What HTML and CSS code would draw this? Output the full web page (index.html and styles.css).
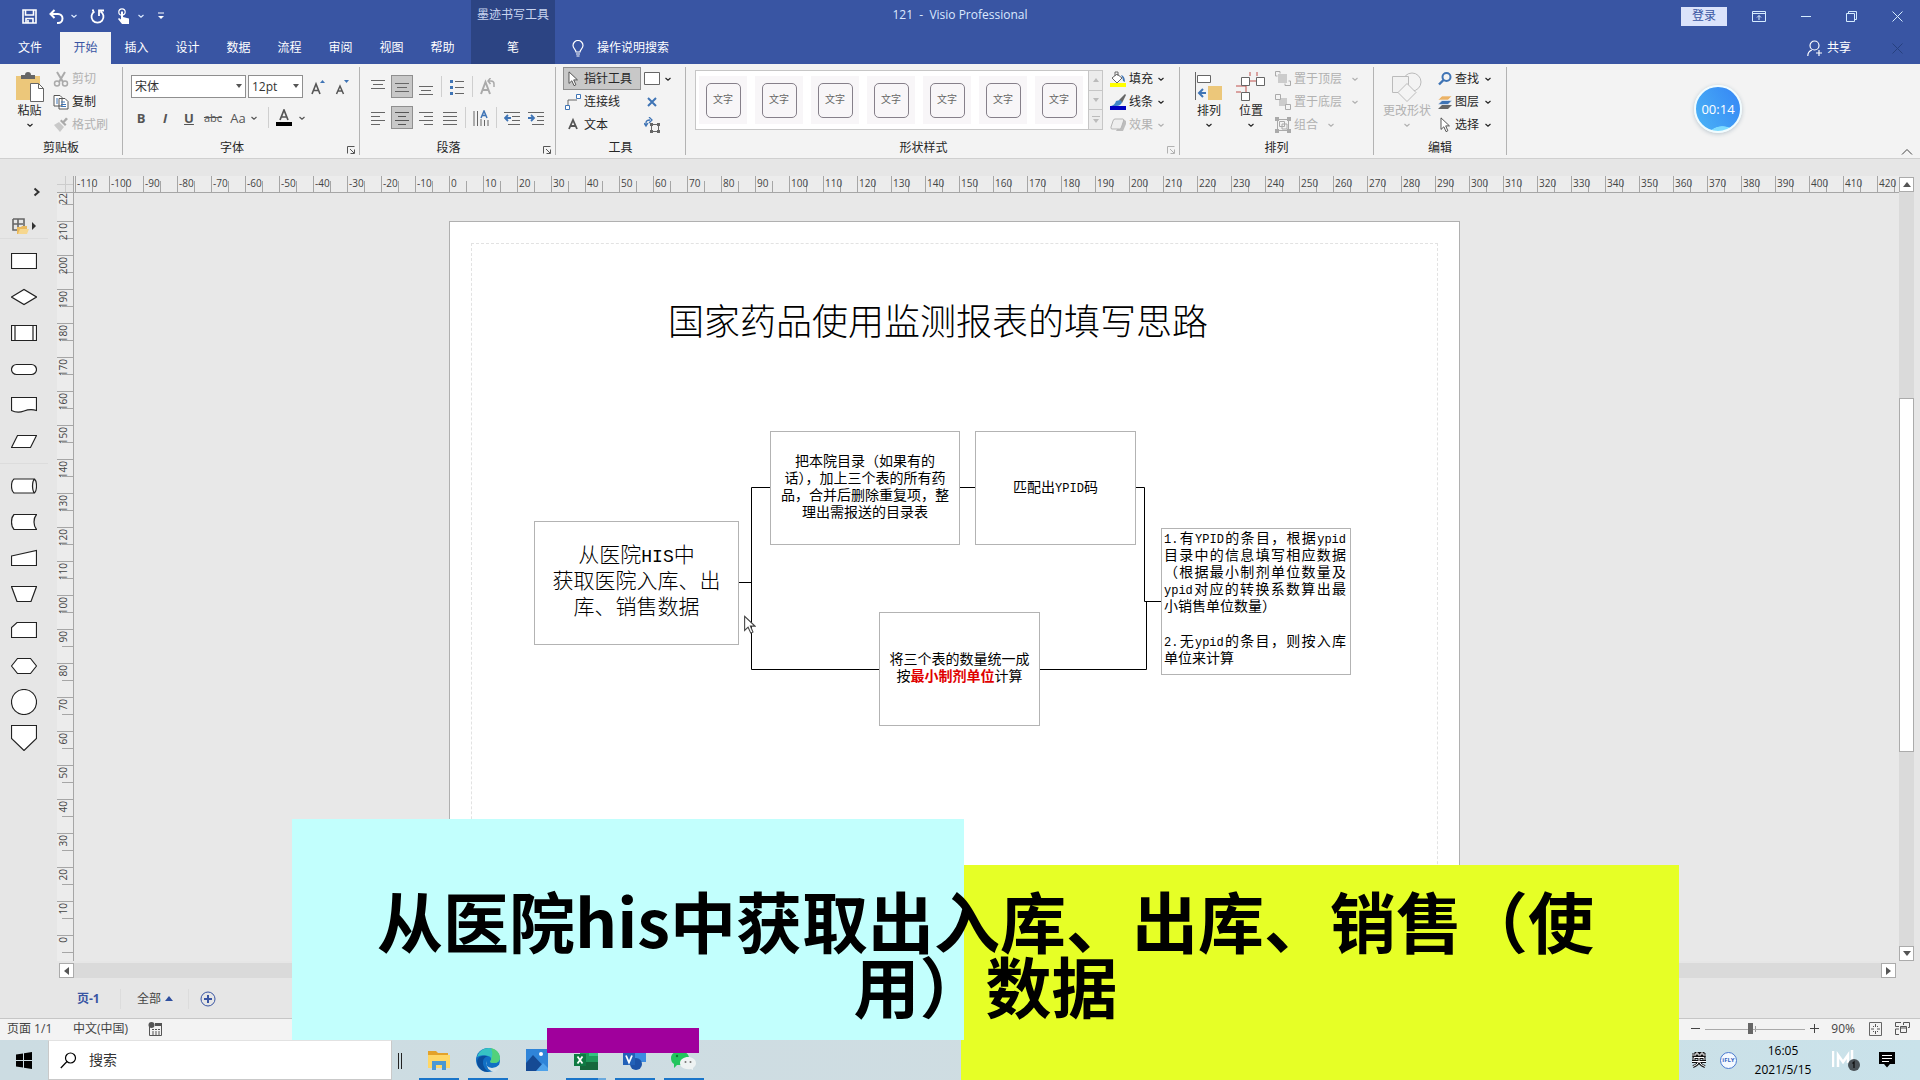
FILE: index.html
```html
<!DOCTYPE html>
<html lang="zh-CN">
<head>
<meta charset="utf-8">
<title>121 - Visio Professional</title>
<link rel="stylesheet" href="styles.css">
</head>
<body>
<svg class="defs" aria-hidden="true">
  <symbol id="chev" viewBox="0 0 8 8"><path d="M1.5 3 4 5.2 6.500 3" fill="none" stroke="currentColor" stroke-width="1.200"/></symbol>
  <symbol id="launch" viewBox="0 0 8 8"><path d="M.5 7.500V.5H7.500M3 3l4 4M7.500 3.500v4h-4" fill="none" stroke="currentColor"/></symbol>
  <symbol id="pointer" viewBox="0 0 12 18"><path d="M1.500 1v13l3.200-3 2.500 5.500 2-1L6.800 10H11z" fill="#fff" stroke="#444"/></symbol>
</svg>

<header class="titlebar">
  <div class="titleleft">
    <div class="qat">
      <button aria-label="保存"><svg width="15" height="15" viewBox="0 0 15 15"><path d="M1 1h13v13H1zM3.500 1v5h8V1M4 14V9.500h7V14M6 11v3" fill="none" stroke="#fff" stroke-width="1.600"/></svg></button>
      <button class="undo" aria-label="撤消"><svg width="15" height="15" viewBox="0 0 15 15"><path d="M5.500 1 1.500 5l4 4M2 5h7a4 4 0 0 1 0 9H8" fill="none" stroke="#fff" stroke-width="2"/></svg><svg class="c8"><use href="#chev"/></svg></button>
      <button aria-label="重做"><svg width="15" height="15" viewBox="0 0 15 15"><path d="M4.500 2.500a6 6 0 1 0 6 0M4 1.500h-2M9 7V1.500h5" fill="none" stroke="#fff" stroke-width="1.800"/></svg></button>
      <button class="touch" aria-label="触摸/鼠标模式"><svg width="14" height="17" viewBox="0 0 14 17"><circle cx="5" cy="4" r="3.200" fill="none" stroke="#fff" stroke-width="1.200"/><path d="M4 3.500h2V9l6 1.500V16H5L1 11l1-1 2 1.500z" fill="#fff"/></svg><svg class="c8"><use href="#chev"/></svg></button>
      <button aria-label="自定义"><svg width="8" height="8" viewBox="0 0 8 8"><path d="M1 1h6" stroke="#fff"/><path d="M1 4h6L4 7z" fill="#fff"/></svg></button>
    </div>
    <div class="ctx">墨迹书写工具</div>
  </div>
  <h1 class="doctitle">121&nbsp; -&nbsp; Visio Professional</h1>
  <div class="winctl">
    <button class="login">登录</button>
    <button aria-label="功能区选项"><svg width="14" height="11" viewBox="0 0 14 11"><path d="M.5.5h13v10H.5zM.5 2.500h13M7 9V4.500M5 6.500l2-2 2 2" fill="none" stroke="#d5ecff"/></svg></button>
    <button aria-label="最小化"><svg width="10" height="10" viewBox="0 0 10 10"><path d="M0 5.500h10" stroke="#d5ecff"/></svg></button>
    <button aria-label="还原"><svg width="11" height="11" viewBox="0 0 11 11"><path d="M.5 2.500h8v8h-8zM2.500 2.500v-2h8v8h-2" fill="none" stroke="#d5ecff"/></svg></button>
    <button aria-label="关闭"><svg width="11" height="11" viewBox="0 0 11 11"><path d="M.5.5l10 10M10.500.5l-10 10" stroke="#d5ecff"/></svg></button>
  </div>
</header>

<nav class="tabs">
  <button class="file">文件</button><button class="on">开始</button><button>插入</button><button>设计</button><button>数据</button><button>流程</button><button>审阅</button><button>视图</button><button>帮助</button>
  <button class="pen">笔</button>
  <button class="tell"><svg width="12" height="17" viewBox="0 0 12 17"><path d="M4 12c0-2.500-3-3.500-3-6.500a5 5 0 0 1 10 0c0 3-3 4-3 6.500zM4 14h4M4.500 16h3" fill="none" stroke="#fff" stroke-width="1.200"/></svg>操作说明搜索</button>
  <button class="share"><svg width="15" height="17" viewBox="0 0 15 17"><circle cx="7.500" cy="5.500" r="4.500" fill="none" stroke="#fff" stroke-width="1.200"/><path d="M.8 16c0-3 1.500-5 4-6M9 13h6M12 10v6" fill="none" stroke="#fff" stroke-width="1.200"/></svg>共享</button>
  <button class="docx" aria-label="关闭文档"><svg width="11" height="11" viewBox="0 0 11 11"><path d="M.5.5l10 10M10.500.5l-10 10" stroke="#26407f"/></svg></button>
</nav>

<section class="ribbon">
  <div class="group clip">
    <div class="gbody">
      <button class="big"><svg width="28" height="30" viewBox="0 0 28 30"><path d="M0 4h24v24H0z" fill="#ecc77a"/><path d="M5 7V3h4a3 3 0 0 1 6 0h4v4z" fill="#666"/><path d="M14.500 11.500h8l5 5v13h-13z" fill="#fff" stroke="#666"/><path d="M22.500 11.500v5h5" fill="none" stroke="#666"/></svg><span>粘贴</span><svg class="c8"><use href="#chev"/></svg></button>
      <div class="col">
        <button class="sm off"><svg width="16" height="16" viewBox="0 0 16 16"><path d="M4 1l6 10M12 1 6 11" stroke="#aaa" stroke-width="2"/><circle cx="4" cy="12.500" r="2.500" fill="none" stroke="#aaa" stroke-width="1.500"/><circle cx="12" cy="12.500" r="2.500" fill="none" stroke="#aaa" stroke-width="1.500"/></svg>剪切</button>
        <button class="sm"><svg width="16" height="16" viewBox="0 0 16 16"><path d="M1 1.500h6l2 2V12H1zM6 4.500h6l3 3V15H6z" fill="#fff" stroke="#555"/><path d="M8 8h4M8 10.500h5M8 12.500h5M3 5h2M3 7h2M3 9h2" stroke="#3f74b5"/></svg>复制</button>
        <button class="sm off"><svg width="16" height="16" viewBox="0 0 16 16"><path d="M1 8l5-3 5 5-4 5z" fill="#c9c9c9"/><path d="M7 4l5 5 1.500-1.500-2-2L15 2l-2-1.500L10 4 8.500 2.500z" fill="#aaa"/></svg>格式刷</button>
      </div>
    </div>
    <div class="glabel">剪贴板</div>
  </div>

  <div class="group font has-lau">
    <div class="gbody two">
      <div class="row">
        <label class="combo wide"><select aria-label="字体"><option>宋体</option></select><svg width="6" height="4" viewBox="0 0 6 4"><path d="M0 0h6L3 4z" fill="#555"/></svg></label>
        <label class="combo"><select aria-label="字号"><option>12pt</option></select><svg width="6" height="4" viewBox="0 0 6 4"><path d="M0 0h6L3 4z" fill="#555"/></svg></label>
        <button class="ib" aria-label="增大字号"><svg width="14" height="16" viewBox="0 0 14 16"><path d="M1 15 5 5l4 10M2.500 11.500h5" fill="none" stroke="#555" stroke-width="1.600"/><path d="M9 4l2.500-3L14 4z" fill="#3f74b5"/></svg></button>
        <button class="ib" aria-label="减小字号"><svg width="14" height="16" viewBox="0 0 14 16"><path d="M1.500 15 5 7l3.500 8M3 12h4" fill="none" stroke="#555" stroke-width="1.500"/><path d="M9 1h5l-2.500 3z" fill="#3f74b5"/></svg></button>
      </div>
      <div class="row fmt">
        <button class="ib"><b>B</b></button><button class="ib"><b><i>I</i></b></button><button class="ib"><b><u>U</u></b></button><button class="ib"><s>abc</s></button><button class="ib aa">Aa<svg class="c8"><use href="#chev"/></svg></button><i class="sep"></i><button class="ib fc" aria-label="字体颜色"><svg width="16" height="17" viewBox="0 0 16 17"><path d="M4 11 8 1l4 10M5.500 8h5" fill="none" stroke="#555" stroke-width="1.700"/><path d="M0 13h16v4H0z"/></svg><svg class="c8"><use href="#chev"/></svg></button>
      </div>
    </div>
    <div class="glabel">字体</div><svg class="lau"><use href="#launch"/></svg>
  </div>

  <div class="group para has-lau">
    <div class="gbody two">
      <div class="row">
        <button class="ib" aria-label="顶端对齐"><svg width="14" height="16"><path d="M0 1.500h14M2 5.500h10M0 9.500h14" stroke="#666"/></svg></button>
        <button class="ib sel" aria-label="中部对齐"><svg width="14" height="16"><path d="M0 4.500h14M2 8.500h10M0 12.500h14" stroke="#666"/></svg></button>
        <button class="ib" aria-label="底端对齐"><svg width="14" height="16"><path d="M0 7.500h14M2 11.500h10M0 15.500h14" stroke="#666"/></svg></button>
        <i class="sep"></i>
        <button class="ib" aria-label="项目符号"><svg width="14" height="16"><path d="M5 2.500h9M5 8.500h9M5 14.500h9" stroke="#666"/><path d="M0 1h3v3H0zM0 7h3v3H0zM0 13h3v3H0z" fill="#3f74b5"/></svg></button>
        <i class="sep"></i>
        <button class="ib" aria-label="旋转文本"><svg width="16" height="17" viewBox="0 0 16 17"><path d="M1 16 5.500 4 10 16M2.500 12h6" fill="none" stroke="#aaa" stroke-width="2"/><path d="M8 3h3a3 3 0 0 1 3 3v3M10.500 0 8 3l2.500 3" fill="none" stroke="#aaa" stroke-width="1.500"/></svg></button>
      </div>
      <div class="row">
        <button class="ib" aria-label="左对齐"><svg width="14" height="14"><path d="M0 1.500h14M0 5.500h9M0 9.500h14M0 13.500h9" stroke="#666"/></svg></button>
        <button class="ib sel" aria-label="居中"><svg width="14" height="14"><path d="M0 1.500h14M3 5.500h8M0 9.500h14M3 13.500h8" stroke="#555"/></svg></button>
        <button class="ib" aria-label="右对齐"><svg width="14" height="14"><path d="M0 1.500h14M5 5.500h9M0 9.500h14M5 13.500h9" stroke="#666"/></svg></button>
        <button class="ib" aria-label="两端对齐"><svg width="14" height="14"><path d="M0 1.500h14M0 5.500h14M0 9.500h14M0 13.500h14" stroke="#666"/></svg></button>
        <i class="sep"></i>
        <button class="ib" aria-label="文字方向"><svg width="16" height="16" viewBox="0 0 16 16"><path d="M1 1v15M4.500 1v15M8 9v7M11.500 10v6M15 10v6" stroke="#666"/><path d="M8 8l3-7 3 7M9 5.500h4" fill="none" stroke="#3f74b5" stroke-width="1.500"/></svg></button>
        <i class="sep"></i>
        <button class="ib" aria-label="减少缩进"><svg width="16" height="14"><path d="M0 1.500h16M8 5.500h8M8 9.500h8M4 13.500h12" stroke="#666"/><path d="M7 7H1M4 4 1 7l3 3" fill="none" stroke="#3f74b5" stroke-width="1.800"/></svg></button>
        <button class="ib" aria-label="增加缩进"><svg width="16" height="14"><path d="M0 1.500h16M9 5.500h7M9 9.500h7M4 13.500h12" stroke="#666"/><path d="M0 7h6M3 4l3 3-3 3" fill="none" stroke="#3f74b5" stroke-width="1.800"/></svg></button>
      </div>
    </div>
    <div class="glabel">段落</div><svg class="lau"><use href="#launch"/></svg>
  </div>

  <div class="group tools">
    <div class="gbody">
      <div class="col">
        <button class="sm sel"><svg width="16" height="16" viewBox="0 0 12 18"><use href="#pointer"/></svg>指针工具</button>
        <button class="sm"><svg width="16" height="16" viewBox="0 0 16 16"><path d="M3 11V6h9" fill="none" stroke="#666"/><path d="M.5 11.500h4v4h-4zM11.500.5h4v4h-4z" fill="#fff" stroke="#3f74b5"/></svg>连接线</button>
        <button class="sm"><svg width="16" height="16" viewBox="0 0 16 16"><path d="M4 12 8 3l4 9M5.500 9h5" fill="none" stroke="#555" stroke-width="1.800"/></svg>文本</button>
      </div>
      <div class="col">
        <button class="sm" aria-label="矩形"><svg width="16" height="14" viewBox="0 0 16 14"><path d="M.5.5h15v12H.5z" fill="#fff" stroke="#666"/></svg><svg class="c8"><use href="#chev"/></svg></button>
        <button class="sm" aria-label="连接点"><svg width="16" height="16" viewBox="0 0 16 16"><path d="M4 4l8 8M12 4l-8 8" stroke="#3f74b5" stroke-width="2"/></svg></button>
        <button class="sm" aria-label="文本块"><svg width="16" height="16" viewBox="0 0 16 16"><path d="M7.500 7.500h7v7h-7z" fill="none" stroke="#666"/><path d="M6 6h3v3H6zM13 6h3v3h-3zM6 13h3v3H6zM13 13h3v3h-3z" fill="#666"/><path d="M2 9V6q0-3 4-3M5 0l3 3-3 3M0 6l2 3 2-3" fill="none" stroke="#3f74b5" stroke-width="1.300"/></svg></button>
      </div>
    </div>
    <div class="glabel">工具</div>
  </div>

  <div class="group style has-lau">
    <div class="gbody">
      <div class="gallery">
        <div class="cells"><button><span>文字</span></button><button><span>文字</span></button><button><span>文字</span></button><button><span>文字</span></button><button><span>文字</span></button><button><span>文字</span></button><button><span>文字</span></button></div>
        <div class="gscroll">
          <button aria-label="上一行"><svg width="6" height="4"><path d="M0 4h6L3 0z" fill="#bbb"/></svg></button>
          <button aria-label="下一行"><svg width="6" height="4"><path d="M0 0h6L3 4z" fill="#bbb"/></svg></button>
          <button aria-label="更多"><svg width="8" height="7"><path d="M0 .5h8" stroke="#bbb"/><path d="M1 3h6L4 7z" fill="#bbb"/></svg></button>
        </div>
      </div>
      <div class="col">
        <button class="sm"><svg width="16" height="16" viewBox="0 0 16 16"><path d="M2 7l5-4 5 4-5 5zM5 5V1h3v4" fill="#fff" stroke="#666"/><path d="M11 4q4 1 4 7l-2-1q0-3-2-6z" fill="#3f74b5"/><path d="M0 12h16v4H0z" fill="#ff0"/></svg>填充<svg class="c8"><use href="#chev"/></svg></button>
        <button class="sm"><svg width="16" height="16" viewBox="0 0 16 16"><path d="M9 6l6-6 1 1-4 8z" fill="#666"/><path d="M1 12q4-1 5-5l4-1 2 2q-1 4-6 4z" fill="#3f86c8"/><path d="M0 12h16v4H0z" fill="#0000c0"/></svg>线条<svg class="c8"><use href="#chev"/></svg></button>
        <button class="sm off"><svg width="16" height="16" viewBox="0 0 16 16"><path d="M6 14h7l3-7V4l-3-2z" fill="#bdbdbd"/><path d="M5 2h8q1 0 .5 2l-2 6q-.5 2-2 2H2q-1.500 0-1-2l2-6q.5-2 2-2z" fill="#eee" stroke="#b5b5b5"/></svg>效果<svg class="c8"><use href="#chev"/></svg></button>
      </div>
    </div>
    <div class="glabel">形状样式</div><svg class="lau off"><use href="#launch"/></svg>
  </div>

  <div class="group arr">
    <div class="gbody">
      <button class="big"><svg width="28" height="30" viewBox="0 0 28 30"><path d="M.5 0v28" stroke="#666"/><path d="M2.500 3.500h13v7h-13z" fill="#fff" stroke="#666"/><path d="M13 14h14v14H13z" fill="#ecc77a"/><path d="M11 21H4M8 17l-4 4 4 4" fill="none" stroke="#3f74b5" stroke-width="2"/></svg><span>排列</span><svg class="c8"><use href="#chev"/></svg></button>
      <button class="big"><svg width="30" height="30" viewBox="0 0 30 30"><path d="M14 9h6M0 14h10v6M0 20h5M14 0v4M21 0v4" fill="none" stroke="#c0504d"/><path d="M5.500 5.500h8v8h-8zM20.500 5.500h8v8h-8zM5.500 20.500h8v8h-8z" fill="#fff" stroke="#666"/></svg><span>位置</span><svg class="c8"><use href="#chev"/></svg></button>
      <div class="col">
        <button class="sm off"><svg width="16" height="16" viewBox="0 0 16 16"><path d="M3 3h9v9H3z" fill="#ccc"/><path d="M5 .5H.5V5M.5 5h2M5 .5v2M15.500 10v4.500H10v-2M15.500 10h-2" fill="none" stroke="#aaa"/></svg>置于顶层<svg class="c8"><use href="#chev"/></svg></button>
        <button class="sm off"><svg width="16" height="16" viewBox="0 0 16 16"><path d="M4 4h8v8H4z" fill="#ccc"/><path d="M.5.5h5v5h-5zM10.500 10.500h5v5h-5z" fill="#f4f4f4" stroke="#aaa"/></svg>置于底层<svg class="c8"><use href="#chev"/></svg></button>
        <button class="sm off"><svg width="16" height="16" viewBox="0 0 16 16"><path d="M2.500 2.500h11v11h-11zM4.500 4.500h5v5h-5zM7 7h5v5H7z" fill="none" stroke="#aaa"/><path d="M0 0h4v4H0zM12 0h4v4h-4zM0 12h4v4H0zM12 12h4v4h-4z" fill="#aaa"/></svg>组合<svg class="c8"><use href="#chev"/></svg></button>
      </div>
    </div>
    <div class="glabel">排列</div>
  </div>

  <div class="group edit">
    <div class="gbody">
      <button class="big off"><svg width="30" height="30" viewBox="0 0 30 30"><circle cx="20" cy="10" r="9" fill="none" stroke="#bbb"/><path d="M.5 4.500h16v16H.5z" fill="#f1f1f1" stroke="#bbb"/><path d="M15 11.500l9 9-9 9-9-9z" fill="#f4f4f4" stroke="#bbb"/></svg><span>更改形状</span><svg class="c8"><use href="#chev"/></svg></button>
      <div class="col">
        <button class="sm"><svg width="16" height="16" viewBox="0 0 16 16"><circle cx="9.500" cy="6" r="4" fill="none" stroke="#3f74b5" stroke-width="2"/><path d="M6.500 9 2 13.500" stroke="#3f74b5" stroke-width="2.400"/></svg>查找<svg class="c8"><use href="#chev"/></svg></button>
        <button class="sm"><svg width="16" height="16" viewBox="0 0 16 16"><path d="M1 15l4-4h10l-4 4z" fill="#666"/><path d="M1 10.500l4-4h10l-4 4z" fill="#3f74b5" stroke="#f4f4f4" stroke-width=".6"/><path d="M1 6l4-4h10l-4 4z" fill="#ecb366" stroke="#f4f4f4" stroke-width=".6"/></svg>图层<svg class="c8"><use href="#chev"/></svg></button>
        <button class="sm"><svg width="16" height="16" viewBox="0 0 12 18"><use href="#pointer"/></svg>选择<svg class="c8"><use href="#chev"/></svg></button>
      </div>
    </div>
    <div class="glabel">编辑</div>
  </div>
  <button class="collapse" aria-label="折叠功能区"><svg width="12" height="8"><path d="M1 6.500 6 1.500l5 5" fill="none" stroke="#444"/></svg></button>
</section>

<main class="work">
  <aside class="stencil">
    <button aria-label="展开形状窗口"><svg width="8" height="10"><path d="M1.500 1.500 5.500 5l-4 3.500" fill="none" stroke="#333" stroke-width="2"/></svg></button>
    <button class="more" aria-label="更多形状"><svg width="24" height="17" viewBox="0 0 24 17"><path d="M1 1h11v7M1 1v11h4M6 1v10M1 6h10" fill="none" stroke="#666" stroke-width="1.600"/><path d="M5 16V9h4l1-1h5v8z" fill="#e9b95e"/><path d="M6 16l2-5h9l-2 5z" fill="#f6d78f"/><path d="M20 4l4 4-4 4z" fill="#333"/></svg></button>
    <ul class="shapes">
      <li><svg><path d="M.5 5.500h25v15H.5z"/></svg></li>
      <li><svg><path d="M.5 13 13 5.500 25.500 13 13 20.500z"/></svg></li>
      <li><svg><path d="M.5 5.500h25v15H.5zM4 5.500v15M22 5.500v15"/></svg></li>
      <li><svg><rect x=".5" y="8.500" width="25" height="10" rx="5"/></svg></li>
      <li><svg><path d="M.5 5.500h25V18.500q-6-2-12.500.5T.5 18.500z"/></svg></li>
      <li class="last"><svg><path d="M6.500 7.500h19l-6 12H.5z"/></svg></li>
      <li><svg><path d="M3 6h20.500q2 2 2 7t-2 7H3Q.5 18 .5 13T3 6zM23.500 6q-2 2-2 7t2 7"/></svg></li>
      <li><svg><path d="M3 5.500h22.500q-2.500 3-2.500 7.500t2.500 7.500H3Q.5 18 .5 13T3 5.500z"/></svg></li>
      <li><svg><path d="M.5 11 25.500 5.500v15H.5z"/></svg></li>
      <li><svg><path d="M.5 5.500h25L20 20.500H6z"/></svg></li>
      <li><svg><path d="M6 5.500h19.500v15H.5v-10z"/></svg></li>
      <li><svg><path d="M6.500 5.500h13l6 7.500-6 7.500h-13L.5 13z"/></svg></li>
      <li><svg><circle cx="13" cy="13" r="12.500"/></svg></li>
      <li><svg><path d="M.5.5h25v13L13 25.500.5 13.500z"/></svg></li>
    </ul>
  </aside>

  <div class="corner"></div>
  <div class="hruler"><span>-110</span><span>-100</span><span>-90</span><span>-80</span><span>-70</span><span>-60</span><span>-50</span><span>-40</span><span>-30</span><span>-20</span><span>-10</span><span>0</span><span>10</span><span>20</span><span>30</span><span>40</span><span>50</span><span>60</span><span>70</span><span>80</span><span>90</span><span>100</span><span>110</span><span>120</span><span>130</span><span>140</span><span>150</span><span>160</span><span>170</span><span>180</span><span>190</span><span>200</span><span>210</span><span>220</span><span>230</span><span>240</span><span>250</span><span>260</span><span>270</span><span>280</span><span>290</span><span>300</span><span>310</span><span>320</span><span>330</span><span>340</span><span>350</span><span>360</span><span>370</span><span>380</span><span>390</span><span>400</span><span>410</span><span>420</span></div>
  <div class="vruler"><div><span>22</span></div><div><span>210</span></div><div><span>200</span></div><div><span>190</span></div><div><span>180</span></div><div><span>170</span></div><div><span>160</span></div><div><span>150</span></div><div><span>140</span></div><div><span>130</span></div><div><span>120</span></div><div><span>110</span></div><div><span>100</span></div><div><span>90</span></div><div><span>80</span></div><div><span>70</span></div><div><span>60</span></div><div><span>50</span></div><div><span>40</span></div><div><span>30</span></div><div><span>20</span></div><div><span>10</span></div><div><span>0</span></div></div>

  <div class="canvas">
    <article class="page">
      <div class="margin"></div>
      <h2>国家药品使用监测报表的填写思路</h2>
      <svg class="wires" width="1010" height="714"><path d="M289 360.500h12.500M320 265.500h-18.500v182H429M510 265.500h15M686 265.500h8.500v114H711M590 447.500h106.500v-68"/></svg>
      <div class="node n1"><p>从医院<em>HIS</em>中<br>获取医院入库、出<br>库、销售数据</p></div>
      <div class="node n2"><p>把本院目录（如果有的<br>话），加上三个表的所有药<br>品，合并后删除重复项，整<br>理出需报送的目录表</p></div>
      <div class="node n3"><p>匹配出<em>YPID</em>码</p></div>
      <div class="node n4"><p>将三个表的数量统一成<br>按<strong>最小制剂单位</strong>计算</p></div>
      <div class="node n5"><p><em>1.</em>有<em>YPID</em>的条目，根据<em>ypid</em>目录中的信息填写相应数据（根据最小制剂单位数量及<em>ypid</em>对应的转换系数算出最小销售单位数量）</p><p><em>2.</em>无<em>ypid</em>的条目，则按入库单位来计算</p></div>
      <svg class="mouse" width="13" height="20" viewBox="0 0 12 18"><use href="#pointer"/></svg>
    </article>
  </div>

  <div class="vscroll">
    <button aria-label="向上"><svg width="8" height="5"><path d="M0 5h8L4 0z" fill="#555"/></svg></button>
    <div class="track"><div class="thumb"></div></div>
    <button aria-label="向下"><svg width="8" height="5"><path d="M0 0h8L4 5z" fill="#555"/></svg></button>
  </div>
  <div class="hscroll">
    <button aria-label="向左"><svg width="5" height="8"><path d="M5 0v8L0 4z" fill="#555"/></svg></button>
    <div class="track"></div>
    <button aria-label="向右"><svg width="5" height="8"><path d="M0 0v8l5-4z" fill="#555"/></svg></button>
  </div>
  <div class="pagetabs">
    <button class="cur">页-1</button>
    <button class="all">全部<svg width="8" height="5"><path d="M0 5h8L4 0z" fill="#2f4f9f"/></svg></button>
    <button aria-label="插入页"><svg width="16" height="16"><circle cx="8" cy="8" r="7" fill="none" stroke="#3955a3"/><path d="M4 8h8M8 4v8" stroke="#3955a3" stroke-width="2"/></svg></button>
  </div>
</main>

<footer class="status">
  <span class="pg">页面 1/1</span><span>中文(中国)</span>
  <svg class="mac" width="14" height="14" viewBox="0 0 14 14"><path d="M1.500 5v8.500h12v-12H7" fill="none" stroke="#555"/><path d="M7 1h7v3H7z" fill="#555"/><circle cx="3.500" cy="3" r="3" fill="#555"/><path d="M4 7.500h8M4 10h8M4 12h8" stroke="#555" stroke-dasharray="2 1"/></svg>
  <div class="zoom">
    <button aria-label="缩小"><svg width="9" height="9"><path d="M0 4.500h9" stroke="#444"/></svg></button>
    <input type="range" aria-label="缩放" min="0" max="100" value="45">
    <button aria-label="放大"><svg width="9" height="9"><path d="M0 4.500h9M4.500 0v9" stroke="#444"/></svg></button>
    <span class="pct">90%</span>
    <button aria-label="适应窗口"><svg width="13" height="14"><path d="M.5.5h12v13H.5z" fill="none" stroke="#666"/><path d="M6.500 2v3M6.500 9v3M2 7h3M8 7h3M4 4l1 1M9 4 8 5M4 10l1-1M9 10 8 9" stroke="#555"/></svg></button>
    <button class="sw" aria-label="切换窗口"><svg width="15" height="13" viewBox="0 0 15 13"><path d="M6 .5H.5v4H4M8.500 3V.5h6v5H13M.5 7v5.500H4M.5 7H4M5.500 4.500h6v6h-6zM5.500 6h6" fill="none" stroke="#555"/></svg></button>
  </div>
</footer>

<div class="taskbar">
  <button class="start" aria-label="开始"><svg width="16" height="17" viewBox="0 0 16 17"><path d="M0 2.500 7 1.500V8H0zM8 1.300 16 0v8H8zM0 9h7v6.500l-7-1zM8 9h8v8l-8-1.300z"/></svg></button>
  <label class="search"><svg width="17" height="17" viewBox="0 0 17 17"><circle cx="10.500" cy="6" r="5" fill="none" stroke="#000" stroke-width="1.200"/><path d="M7 9.500.8 16" stroke="#000" stroke-width="1.200"/></svg><input type="text" aria-label="搜索" placeholder="搜索"></label>
  <i class="grip"></i>
  <div class="apps">
    <button class="run" aria-label="文件资源管理器"><svg width="22" height="20" viewBox="0 0 22 20"><path d="M0 1h8l2 2h10v15H0z" fill="#e3a22a"/><path d="M0 5h22v13H0z" fill="#ffd766"/><path d="M4 20v-9h14v9h-4v-5H8v5z" fill="#4a98d3"/></svg></button>
    <button class="run" aria-label="Edge"><svg width="24" height="24" viewBox="0 0 24 24"><circle cx="12" cy="12" r="12" fill="#1170c4"/><path d="M1 9Q4 0 13 0q9 1 11 9 0 6-6 6-3 0-4-1 3-5-2-6Q5 6 1 9z" fill="#36c4c4"/><path d="M15 0q8 2 9 9 0 6-6 6-3 0-4-1 4-7 1-14z" fill="#53d17b"/><path d="M12 8q-6 2-5 8 1 5 6 8Q3 24 1 15 1 6 12 8z" fill="#0b4f9c"/><path d="M10 13q-1 6 6 7 4 0 7-3l1 2-5 5q-9-1-9-11z" fill="#d3e2e8"/></svg></button>
    <button aria-label="照片"><svg width="22" height="22" viewBox="0 0 22 22"><path d="M0 0h22v22H0z" fill="#2f84d8"/><path d="M0 14 7 6l15 16H0z" fill="#154a94"/><path d="m10 22 7-8 5 5v3z" fill="#4ea2ea"/><circle cx="15" cy="5" r="2" fill="#fff"/></svg></button>
    <button class="run multi" aria-label="Excel"><svg width="24" height="20" viewBox="0 0 24 20"><path d="M6 0h18v20H6z" fill="#1f9a5c"/><path d="M15 0h9v6h-9z" fill="#34c481"/><path d="M6 12h18v8H6z" fill="#16683c"/><path d="M0 4h12v12H0z" fill="#0f7a43"/><path d="m3.500 6.500 5 7M8.500 6.500l-5 7" stroke="#fff" stroke-width="1.800"/></svg></button>
    <button class="run" aria-label="Visio"><svg width="24" height="20" viewBox="0 0 24 20"><path d="M12 1h11v11H12z" fill="#3c8be0"/><circle cx="13" cy="14" r="6" fill="#1c53a8"/><path d="M0 3h12v12H0z" fill="#2261b8"/><path d="m3 5.500 3 7 3-7" fill="none" stroke="#fff" stroke-width="1.800"/></svg></button>
    <button class="run" aria-label="微信"><svg width="26" height="21" viewBox="0 0 26 21"><path d="M9 1c5 0 9 3 9 7s-4 7-9 7l-3 0-3 3v-4C1 13 0 11 0 8 0 4 4 1 9 1z" fill="#22c55e"/><circle cx="6" cy="6" r="1.200" fill="#0b7a35"/><path d="M17 7c4 0 8 2.500 8 6 0 2-1 3.500-3 5v2l-2-1c-6 1-11-1.500-11-6 0-3.500 4-6 8-6z" fill="#eef3f3"/><circle cx="14.500" cy="12" r="1" fill="#777"/><circle cx="19.500" cy="12" r="1" fill="#777"/></svg></button>
  </div>
  <div class="tray">
    <button aria-label="输入法"><svg width="16" height="16" viewBox="0 0 16 16"><path d="M1 3h4V1h2v2h3V1h2v2h3M3 8V5.500h10V8M1 9.500h14M8 5v4q-1 4-6 5.500M8 9q1 4 6 5.500" fill="none" stroke="#111" stroke-width="3"/><path d="M1 3h4V1h2v2h3V1h2v2h3M3 8V5.500h10V8M1 9.500h14M8 5v4q-1 4-6 5.500M8 9q1 4 6 5.500" fill="none" stroke="#fff" stroke-width="1"/></svg></button>
    <button class="ifly">iFLY</button>
    <div class="clock"><span>16:05</span><span>2021/5/15</span></div>
    <button class="m" aria-label="应用"><svg width="28" height="22" viewBox="0 0 28 22"><path d="M1 2v16M6 18V6l5 7 5-7v8M20 1v13" fill="none" stroke="#fff" stroke-width="2.500"/><circle cx="22" cy="16" r="6" fill="#4a5257"/><path d="m20.500 14.500 1.500-1.500v6" fill="none" stroke="#111" stroke-width="1.300"/></svg></button>
    <button aria-label="通知"><svg width="16" height="16" viewBox="0 0 16 16"><path d="M0 0h16v12h-5l-3 3.500L5 12H0z"/><path d="M3 3.500h10M3 6.500h10M3 9.500h7" stroke="#fff"/></svg></button>
  </div>
</div>

<div class="timer">00:14</div>
<div class="banner">
  <div class="yellow"></div><div class="cyan"></div>
  <p>从医院his中获取出入库、出库、销售（使<br>用）数据</p>
  <div class="purple"></div>
</div>
</body>
</html>
```
FILE: styles.css
```css
* { box-sizing: border-box; }
html, body { height: 100%; }
body {
  margin: 0; display: flex; flex-direction: column; position: relative; overflow: hidden;
  font: 12px/16px "Open Sans", "Noto Sans CJK SC", sans-serif; color: #262626; background: #e6e6e6;
}
button { border: 0; padding: 0; margin: 0; background: none; font: inherit; color: inherit; display: flex; align-items: center; white-space: nowrap; }
h1, h2, p, ul { margin: 0; padding: 0; font-weight: 400; }
svg { flex: none; display: block; }
.defs { position: absolute; width: 0; height: 0; }
.c8 { width: 8px; height: 8px; }
.off { color: #b1b1b1; }

.titlebar { display: grid; grid-template-columns: 1fr auto 1fr; height: 32px; flex: none; background: #3955a3; color: #dbe9ff; }
.titleleft { display: flex; }
.qat { width: 471px; display: flex; align-items: center; padding-left: 22px; gap: 12px; }
.qat .undo, .qat .touch { gap: 6px; }
.ctx { width: 84px; background: #2c4483; text-align: center; line-height: 30px; color: #c9d5f0; }
.doctitle { font-size: 12px; line-height: 30px; }
.winctl { display: flex; justify-content: flex-end; align-items: center; gap: 35px; padding-right: 17px; }
.winctl .login { width: 46px; height: 19px; justify-content: center; background: #dbe3fb; color: #3955a3; margin-right: -10px; }

.tabs { display: flex; height: 32px; flex: none; background: #3955a3; color: #fff; padding-right: 17px; }
.tabs button { width: 51px; justify-content: center; }
.tabs .file { width: 60px; }
.tabs .on { background: #f3f3f3; color: #3955a3; }
.tabs .pen { width: 84px; background: #2c4483; margin-left: 3px; }
.tabs .tell { width: auto; gap: 13px; margin-left: 17px; }
.tabs .share { width: auto; gap: 5px; margin-left: auto; }
.tabs .docx { width: 11px; margin-left: 41px; }

.ribbon { display: flex; height: 95px; flex: none; background: #f3f3f3; border-bottom: 1px solid #cfcfcf; padding: 3px 0; position: relative; }
.group { display: flex; flex-direction: column; border-right: 1px solid #b3b3b3; position: relative; flex: none; }
.gbody { display: flex; height: 71px; flex: none; }
.glabel { text-align: center; line-height: 20px; }
.has-lau .glabel { padding-right: 18px; }
.lau { position: absolute; right: 4px; bottom: 1px; width: 8px; height: 8px; color: #555; }
.lau.off { color: #b1b1b1; }
.col { display: flex; flex-direction: column; }
.sm { height: 23px; gap: 3px; }
.sm .c8 { margin-left: 1px; }
.big { flex-direction: column; padding-top: 5px; height: 70px; }
.big span { line-height: 18px; }
.big .c8 { margin-top: 1px; }
.two { flex-direction: column; gap: 8px; padding-top: 8px; }
.row { display: flex; height: 23px; align-items: center; }
.ib { width: 24px; height: 23px; justify-content: center; color: #555; }
.sel { background: #c8c8c8; outline: 1px solid #8f8f8f; outline-offset: -1px; }
.sep { width: 1px; height: 21px; background: #cfcfcf; }
.clip { width: 123px; }
.clip .gbody { padding-left: 12px; }
.clip .big { width: 35px; }
.clip .col { padding-left: 6px; }

.font { width: 237px; }
.font .gbody { padding-left: 8px; }
.combo { position: relative; width: 55px; height: 23px; margin-right: 3px; }
.combo.wide { width: 115px; margin-right: 2px; }
.combo select { appearance: none; width: 100%; height: 100%; border: 1px solid #8f8f8f; background: #fff; border-radius: 0; padding: 0 3px; font: inherit; color: #333; }
.combo svg { position: absolute; right: 4px; top: 9px; pointer-events: none; }
.fmt .ib { font-size: 13px; margin-left: -2px; margin-right: 2px; }
.fmt s { font-size: 11px; }
.fmt .aa { width: 38px; gap: 4px; }
.fmt .sep { margin-left: 3px; }
.fmt .fc { width: 40px; gap: 6px; margin-left: 2px; }

.para { width: 196px; }
.para .gbody { padding-left: 6px; }
.para .sel { width: 22px; margin: 0 1px; }
.para .sep { margin: 0 3px; }

.tools { width: 130px; }
.tools .gbody { padding-left: 7px; gap: 3px; }
.tools .sel { width: 78px; }
.tools .sm { padding-left: 2px; }
.tools .col + .col .sm { padding: 0; }

.style { width: 494px; }
.style .gbody { padding-left: 9px; gap: 7px; }
.gallery { display: flex; width: 408px; height: 60px; margin-top: 3px; background: #fff; border: 1px solid #c6c6c6; }
.cells { display: flex; gap: 8px; padding: 5px 3px; flex: 1; }
.cells button { width: 48px; height: 48px; justify-content: center; background: #f8f6f8; }
.cells span { width: 35px; height: 35px; border: 1px solid #86808a; border-radius: 5px; line-height: 31px; font-size: 10px; text-align: center; color: #666; }
.gscroll { width: 14px; display: flex; flex-direction: column; background: #ececec; border-left: 1px solid #c6c6c6; }
.gscroll button { flex: 1; justify-content: center; }
.gscroll button + button { border-top: 1px solid #c6c6c6; }

.arr { width: 194px; }
.arr .gbody { padding-left: 8px; }
.arr .big { width: 42px; }
.arr .col { padding-left: 3px; }
.arr .sm .c8 { margin-left: 6px; }

.edit { width: 133px; }
.edit .gbody { padding-left: 9px; }
.edit .col { padding-left: 6px; }
.edit .sm { gap: 2px; }
.edit .sm .c8 { margin-left: 3px; }
.collapse { position: absolute; right: 7px; bottom: 2px; }

.work { flex: 1; min-height: 0; display: grid; grid-template-columns: 57px 17px 1fr 21px; grid-template-rows: 17px 17px 1fr 18px 39px; }
.stencil { grid-area: 1 / 1 / 6 / 2; display: flex; flex-direction: column; padding-top: 7px; }
.stencil button { height: 52px; padding-left: 33px; }
.stencil .more { height: 16px; padding-left: 12px; }
.shapes { list-style: none; border-top: 1px solid #dcdcdc; width: 48px; margin-top: 4px; padding-top: 4px; }
.shapes li { height: 36px; padding: 5px 0 0 11px; }
.shapes .last { height: 41px; border-bottom: 1px solid #dcdcdc; margin-bottom: 4px; }
.shapes svg { width: 26px; height: 26px; fill: #fff; stroke: #222; stroke-width: 1.2px; }
.corner { grid-area: 2 / 2; border-bottom: 1px solid #a6a6a6; border-right: 1px solid #a6a6a6; background: linear-gradient(#ccc, #ccc) 8px 0 / 1px 100% no-repeat, linear-gradient(#ccc, #ccc) 0 8px / 100% 1px no-repeat; }
.hruler { grid-area: 2 / 3; display: flex; overflow: hidden; border-bottom: 1px solid #a6a6a6; padding-left: 1px; background: #ececec; }
.hruler span { flex: none; width: 34px; border-left: 1px solid #a6a6a6; padding-left: 1px; font-size: 10px; line-height: 15px; color: #444; background: linear-gradient(#a6a6a6, #a6a6a6) 16px 5px / 1px 11px no-repeat; }
.vruler { grid-area: 3 / 2; overflow: hidden; border-right: 1px solid #a6a6a6; background: #ececec; }
.vruler div { height: 34px; border-top: 1px solid #a6a6a6; background: linear-gradient(#a6a6a6, #a6a6a6) 5px 16px / 11px 1px no-repeat; padding-top: 1px; }
.vruler div:first-child { height: 28px; border: 0; padding: 0; background-position: 5px 11px; }
.vruler span { display: block; writing-mode: vertical-rl; transform: rotate(180deg); font-size: 10px; line-height: 13px; width: 13px; color: #444; }
.canvas { grid-area: 3 / 3; position: relative; overflow: hidden; background: #e8e8e8; }

.page { position: absolute; left: 375px; top: 28px; width: 1011px; height: 715px; background: #fff; border: 1px solid #b0b0b0; font-family: "Noto Sans CJK SC", sans-serif; font-weight: 300; color: #000; }
.margin { position: absolute; inset: 21px; border: 1px dashed #e2e2e2; }
.page h2 { position: absolute; left: 0; width: 976px; top: 73px; font-size: 36px; line-height: 48px; text-align: center; font-weight: 300; }
.wires { position: absolute; left: 0; top: 0; fill: none; stroke: #000; }
.node { position: absolute; border: 1px solid #b3b3b3; background: #fff; display: flex; flex-direction: column; justify-content: center; text-align: center; font-size: 14px; line-height: 17px; white-space: nowrap; font-weight: 400; padding-bottom: 4px; }
.node p { font-weight: inherit; }
.node em { font-family: "Liberation Mono", monospace; font-size: 12px; line-height: 1px; font-style: normal; }
.node strong { color: #e00000; font-weight: 700; }
.n1 { left: 84px; top: 299px; width: 205px; height: 124px; padding-bottom: 8px; font-size: 21px; line-height: 26px; font-weight: 300; }
.n1 em { font-size: 18px; }
.n2 { left: 320px; top: 209px; width: 190px; height: 114px; }
.n3 { left: 525px; top: 209px; width: 161px; height: 114px; }
.n4 { left: 429px; top: 390px; width: 161px; height: 114px; }
.n5 { left: 711px; top: 306px; width: 190px; height: 147px; padding: 0 4px 8px 2px; gap: 18px; text-align: justify; white-space: normal; }
.mouse { position: absolute; left: 293px; top: 393px; }

.vscroll { grid-area: 2 / 4 / 4 / 5; width: 15px; padding-top: 1px; display: flex; flex-direction: column; }
.vscroll button, .hscroll button { width: 15px; height: 15px; flex: none; justify-content: center; background: #fff; border: 1px solid #ababab; }
.track { flex: 1; background: #dadada; }
.vscroll .thumb { height: 47%; margin-top: 206px; background: #fff; border: 1px solid #ababab; }
.hscroll { grid-area: 4 / 2 / 5 / 5; display: flex; margin: 2px 24px 1px 2px; }
.pagetabs { grid-area: 5 / 2 / 6 / 5; display: flex; align-items: center; padding-left: 20px; color: #444; }
.pagetabs .cur { width: 44px; color: #3955a3; font-weight: 700; height: 20px; border-right: 1px solid #dcdcdc; }
.pagetabs .all { gap: 4px; width: 68px; padding-left: 16px; height: 20px; border-right: 1px solid #dcdcdc; margin-right: 11px; }

.status { height: 22px; flex: none; display: flex; align-items: center; border-top: 1px solid #c6c6c6; background: #f3f3f3; padding: 0 10px 2px 7px; color: #444; }
.status .pg { width: 66px; }
.mac { margin-left: 20px; }
.zoom { margin-left: auto; display: flex; align-items: center; }
.zoom input { appearance: none; width: 100px; height: 12px; margin: 0 5px; background: linear-gradient(#aaa, #aaa) 0 6px / 100% 1px no-repeat, linear-gradient(#999, #999) 50px 3px / 1px 6px no-repeat; }
.zoom input::-webkit-slider-thumb { appearance: none; width: 5px; height: 11px; background: #666; }
.pct { margin: 0 14px 0 12px; }
.sw { margin-left: 13px; }

.taskbar { height: 40px; flex: none; display: flex; background: linear-gradient(90deg, #ccdce2, #cfdde2 60%, #c9e2ea); color: #000; }
.start { width: 48px; justify-content: center; }
.search { width: 344px; display: flex; align-items: center; gap: 12px; padding-left: 11px; background: #fff; border: 1px solid #c9c9c9; border-top-color: #e2e2e2; }
.search input { border: 0; background: none; font: inherit; font-size: 14px; width: 200px; padding: 0; outline: 0; }
.search input::placeholder { color: #333; }
.grip { width: 4px; height: 16px; margin: 13px 0 0 6px; border-left: 1px solid #222; border-right: 1px solid #222; }
.apps { display: flex; margin-left: 12px; }
.apps button { width: 49px; justify-content: center; }
.apps .run { background: linear-gradient(#1a75c9, #1a75c9) 5px 38px / 40px 2px no-repeat; }
.apps .multi { background: linear-gradient(90deg, #1a75c9 32px, #6aa9dd 32px) 5px 38px / 40px 2px no-repeat; }
.tray { margin-left: auto; display: flex; align-items: center; padding-right: 25px; }
.ifly { width: 17px; height: 17px; margin-left: 13px; border: 1px solid #4a7ad0; border-radius: 50%; background: #f4f9ff; color: #3564c0; font-size: 6px; font-weight: 700; justify-content: center; }
.clock { width: 92px; display: flex; flex-direction: column; text-align: center; line-height: 19px; padding-bottom: 1px; }
.tray .m { margin: 0 19px 0 3px; }

.timer { position: absolute; right: 178px; top: 85px; width: 48px; height: 48px; border: 2px solid #f0fcff; border-radius: 50%; background: radial-gradient(circle at 60% 130%, #7fdcff 0 28%, transparent 29%), linear-gradient(60deg, #4bb4f6, #3585f5); box-shadow: 0 1px 4px #b9c4cc; color: #fff; font-size: 13px; line-height: 44px; text-align: center; }

.banner { position: absolute; left: 292px; right: 241px; bottom: 0; height: 261px; }
.cyan { position: absolute; left: 0; top: 0; width: 672px; height: 221px; background: #c2fffd; }
.yellow { position: absolute; left: 669px; right: 0; top: 46px; bottom: 0; background: #e6ff26; }
.banner p { position: relative; padding-top: 68px; font-family: "Noto Sans CJK SC", sans-serif; font-size: 66px; line-height: 65px; font-weight: 700; text-align: center; color: #000; white-space: nowrap; }
.purple { position: absolute; left: 255px; top: 209px; width: 152px; height: 25px; background: #a0009c; }
```
